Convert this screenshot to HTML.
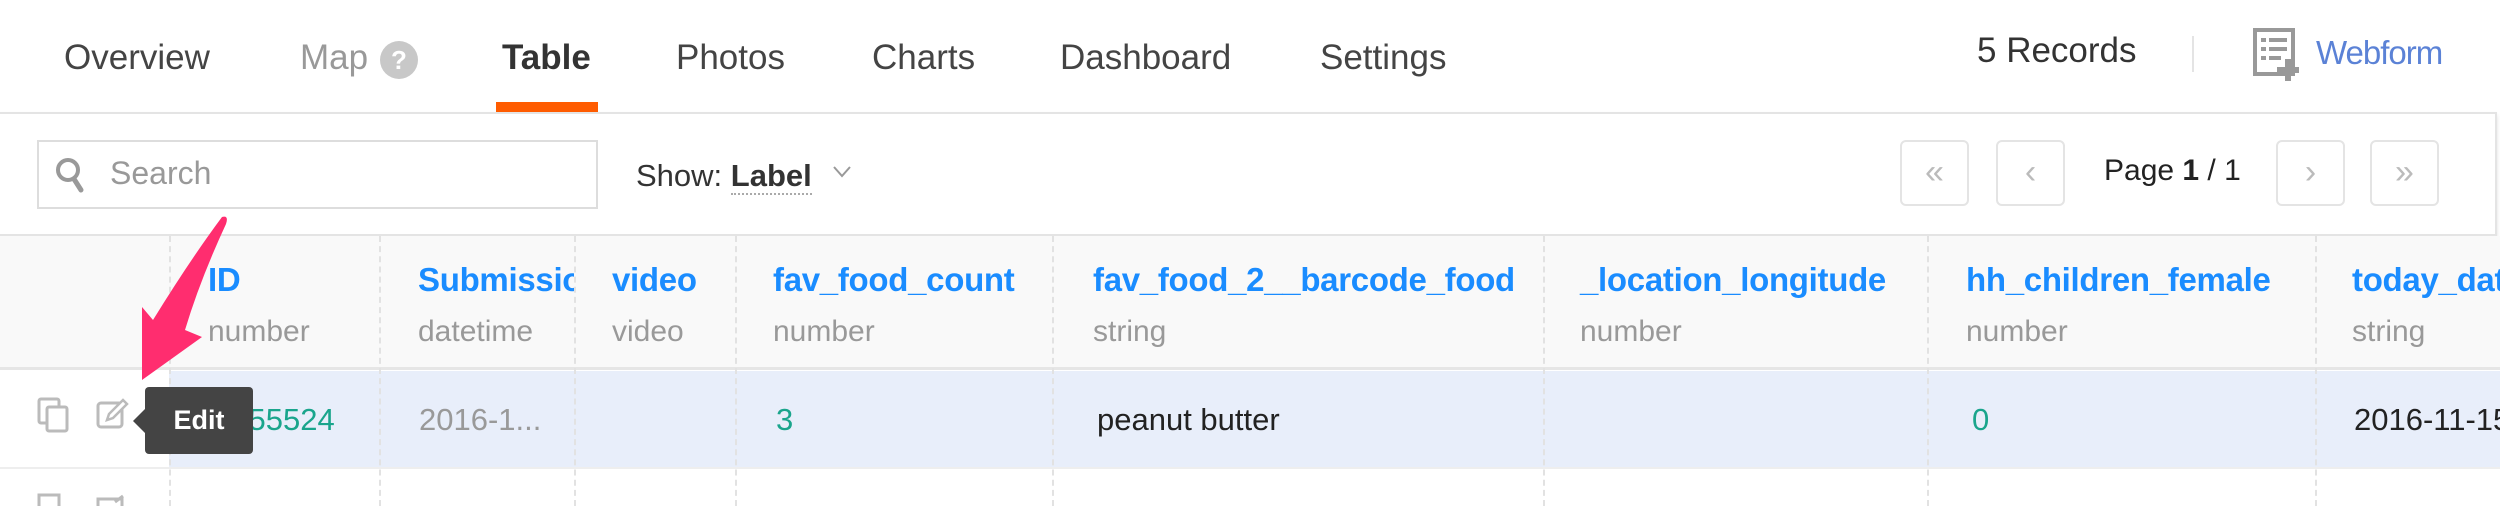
<!DOCTYPE html>
<html><head><meta charset="utf-8"><style>
*{margin:0;padding:0;box-sizing:border-box}
body{width:2500px;height:506px;overflow:hidden;background:#fff;font-family:"Liberation Sans",sans-serif;position:relative}
.a{position:absolute;white-space:nowrap}
.nav{font-size:35px;color:#444;top:38px}
.hl{font-size:33px;font-weight:bold;color:#1a8cff;top:261px;letter-spacing:-0.3px}
.ht{font-size:30px;color:#999;top:315px}
.dv{position:absolute;top:236px;height:270px;border-left:2px dashed #e2e2e2}
.d{font-size:31px;top:402px}
.btn{position:absolute;top:140px;width:69px;height:66px;border:2px solid #e4e4e4;border-radius:6px;color:#bbb;font-size:34px;text-align:center;line-height:60px}
</style></head><body>
<div class="a nav" style="left:64px">Overview</div>
<div class="a nav" style="left:300px;color:#999">Map</div>
<div class="a" style="left:380px;top:41px;width:38px;height:38px;border-radius:50%;background:#c8c8c8;color:#fff;font-size:26px;font-weight:bold;text-align:center;line-height:38px">?</div>
<div class="a nav" style="left:502px;font-weight:bold;color:#333">Table</div>
<div class="a" style="left:496px;top:102px;width:102px;height:11px;background:#ff5c00"></div>
<div class="a nav" style="left:676px">Photos</div>
<div class="a nav" style="left:872px">Charts</div>
<div class="a nav" style="left:1060px">Dashboard</div>
<div class="a nav" style="left:1320px">Settings</div>
<div class="a" style="left:1977px;top:31px;font-size:35px;color:#333">5 Records</div>
<div class="a" style="left:2192px;top:36px;width:2px;height:36px;background:#e4e4e4"></div>
<svg class="a" style="left:2252px;top:27px" width="56" height="56" viewBox="0 0 56 56"><rect x="3" y="3" width="38" height="44" fill="none" stroke="#999" stroke-width="4"/><g fill="#999"><rect x="9" y="11" width="5" height="4"/><rect x="17" y="11" width="18" height="4"/><rect x="9" y="20" width="5" height="4"/><rect x="17" y="20" width="18" height="4"/><rect x="9" y="29" width="5" height="4"/><rect x="17" y="29" width="12" height="4"/><rect x="33" y="32" width="6" height="22"/><rect x="25" y="40" width="22" height="6"/></g></svg>
<div class="a" style="left:2316px;top:34px;font-size:33px;color:#5b82d6;letter-spacing:-1px">Webform</div>
<div class="a" style="left:0;top:112px;width:2497px;height:124px;border:2px solid #e4e4e4;border-left:none;box-shadow:0 3px 4px rgba(0,0,0,.12);background:#fff"></div>
<div class="a" style="left:37px;top:140px;width:561px;height:69px;border:2px solid #ddd"></div>
<svg class="a" style="left:55px;top:157px" width="30" height="36" viewBox="0 0 30 36"><circle cx="13" cy="13" r="10" fill="none" stroke="#999" stroke-width="4"/><path d="M19 22 L26 33" stroke="#999" stroke-width="5" stroke-linecap="round"/></svg>
<div class="a" style="left:110px;top:155px;font-size:32px;color:#999">Search</div>
<div class="a" style="left:636px;top:158px;font-size:31px;color:#333">Show: <b style="border-bottom:2px dotted #aaa">Label</b></div>
<svg class="a" style="left:832px;top:165px" width="20" height="14"><path d="M2 2 L10 11 L18 2" fill="none" stroke="#999" stroke-width="2"/></svg>
<div class="btn" style="left:1900px">«</div>
<div class="btn" style="left:1996px">‹</div>
<div class="a" style="left:2104px;top:154px;font-size:30px;color:#222">Page <b>1</b> / 1</div>
<div class="btn" style="left:2276px">›</div>
<div class="btn" style="left:2370px">»</div>
<div class="a" style="left:0;top:236px;width:2500px;height:134px;background:#f9f9f9;border-bottom:3px solid #e6e6e6"></div>
<div class="a" style="left:169px;top:371px;width:2331px;height:96px;background:#e8eefa"></div>
<div class="a" style="left:0;top:467px;width:2500px;height:2px;background:#eee"></div>
<div class="dv" style="left:169px"></div><div class="dv" style="left:379px"></div><div class="dv" style="left:574px"></div><div class="dv" style="left:735px"></div><div class="dv" style="left:1052px"></div><div class="dv" style="left:1543px"></div><div class="dv" style="left:1927px"></div><div class="dv" style="left:2315px"></div>
<div class="a hl" style="left:208px">ID</div><div class="a ht" style="left:208px">number</div>
<div class="a hl" style="left:418px;width:156px;overflow:hidden">Submission</div><div class="a ht" style="left:418px">datetime</div>
<div class="a hl" style="left:612px">video</div><div class="a ht" style="left:612px">video</div>
<div class="a hl" style="left:773px">fav_food_count</div><div class="a ht" style="left:773px">number</div>
<div class="a hl" style="left:1093px">fav_food_2__barcode_food</div><div class="a ht" style="left:1093px">string</div>
<div class="a hl" style="left:1580px">_location_longitude</div><div class="a ht" style="left:1580px">number</div>
<div class="a hl" style="left:1966px">hh_children_female</div><div class="a ht" style="left:1966px">number</div>
<div class="a hl" style="left:2352px">today_date</div><div class="a ht" style="left:2352px">string</div>
<div class="a d" style="left:419px;color:#999">2016-1...</div>
<div class="a d" style="left:776px;color:#1aa58c">3</div>
<div class="a d" style="left:1097px;color:#222">peanut butter</div>
<div class="a d" style="left:1972px;color:#1aa58c">0</div>
<div class="a d" style="left:2354px;color:#222">2016-11-15T</div>
<svg class="a" style="left:36px;top:396px" width="36" height="38"><rect x="3" y="3" width="20" height="24" rx="2" fill="none" stroke="#bbb" stroke-width="3"/><rect x="11" y="11" width="20" height="24" rx="2" fill="#fff" stroke="#bbb" stroke-width="3"/></svg>
<svg class="a" style="left:95px;top:396px" width="36" height="36"><rect x="3" y="7" width="24" height="24" rx="3" fill="none" stroke="#bbb" stroke-width="3"/><path d="M12 24 L14 18 L28 4 L32 8 L18 22 Z" fill="#fff" stroke="#bbb" stroke-width="2.5"/></svg>
<svg class="a" style="left:36px;top:492px" width="36" height="14"><rect x="3" y="3" width="20" height="24" fill="none" stroke="#bbb" stroke-width="3"/></svg>
<svg class="a" style="left:95px;top:492px" width="36" height="14"><rect x="3" y="7" width="24" height="24" fill="none" stroke="#bbb" stroke-width="3"/><path d="M20 10 L28 4" stroke="#bbb" stroke-width="3"/></svg>
<div class="a d" style="left:214px;color:#1aa58c">7755524</div>
<div class="a" style="left:145px;top:387px;width:108px;height:67px;background:#444;border-radius:4px;color:#fff;font-size:27px;font-weight:bold;text-align:center;line-height:67px">Edit</div>
<div class="a" style="left:133px;top:408px;width:0;height:0;border-top:13px solid transparent;border-bottom:13px solid transparent;border-right:13px solid #444"></div>
<svg class="a" style="left:0;top:0" width="300" height="420"><path d="M222 217 Q229 215 226 224 Q200 280 185 330 L202 337 L142 380 L142 307 L153 320 Q190 260 222 217 Z" fill="#ff2d6f"/></svg>
</body></html>
